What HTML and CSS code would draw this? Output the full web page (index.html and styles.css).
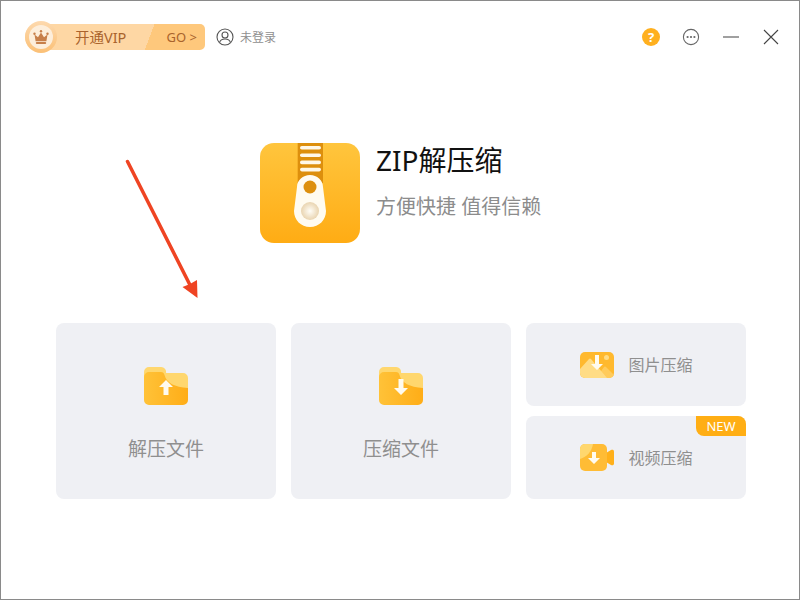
FILE: index.html
```html
<!DOCTYPE html>
<html>
<head>
  <title>ZIP解压缩</title>
  <link rel="stylesheet" href="styles.css">
</head>
<body>
  <div class="window">
    <div class="topbar">
      <div class="vip">
        <div class="vip-badge">
          <svg width="32" height="32" viewBox="0 0 32 32">
            <defs>
              <linearGradient id="badgeRing" x1="0" y1="0" x2="0" y2="1">
                <stop offset="0" stop-color="#fdd9ae"/>
                <stop offset="1" stop-color="#fbc076"/>
              </linearGradient>
            </defs>
            <circle cx="16" cy="16" r="16" fill="url(#badgeRing)"/>
            <circle cx="16" cy="16" r="12" fill="#fdeedb"/>
            <path d="M9.500 13.600l3.500 2.600L16 11.400l3 4.800 3.500-2.600-1.100 6.600H10.600z" fill="#c77f4a"/>
            <rect x="10.800" y="21" width="10.400" height="2" rx="1" fill="#c77f4a"/>
            <circle cx="9.500" cy="12.800" r="1.200" fill="#c77f4a"/>
            <circle cx="16" cy="10.200" r="1.200" fill="#c77f4a"/>
            <circle cx="22.500" cy="12.800" r="1.200" fill="#c77f4a"/>
          </svg>
        </div>
        <span class="vip-text">开通VIP</span>
        <span class="vip-go">GO &gt;</span>
      </div>
      <div class="user">
        <svg width="18" height="18" viewBox="0 0 18 18" fill="none" stroke="#555" stroke-width="1.1">
          <circle cx="9" cy="9" r="8"/>
          <circle cx="9" cy="7" r="3"/>
          <path d="M3.600 14.400c.6-2.400 2.600-3.400 5.400-3.400s4.800 1 5.400 3.400"/>
        </svg>
        <span>未登录</span>
      </div>
      <div class="controls">
        <div class="help">?</div>
        <svg width="18" height="18" viewBox="0 0 18 18">
          <circle cx="9" cy="9" r="7.600" fill="none" stroke="#666" stroke-width="1.1"/>
          <circle cx="5.600" cy="9" r="1.100" fill="#666"/>
          <circle cx="9" cy="9" r="1.100" fill="#666"/>
          <circle cx="12.400" cy="9" r="1.100" fill="#666"/>
        </svg>
        <svg class="ctl-min" width="16" height="16" viewBox="0 0 16 16">
          <path d="M0 8h16" stroke="#777" stroke-width="1.400"/>
        </svg>
        <svg class="ctl-close" width="16" height="16" viewBox="0 0 16 16">
          <path d="M1 1l14 14M15 1L1 15" stroke="#444" stroke-width="1.100" fill="none"/>
        </svg>
      </div>
    </div>

    <div class="hero">
      <svg class="logo" width="100" height="100" viewBox="0 0 100 100">
        <defs>
          <linearGradient id="logoFill" x1="0" y1="0" x2="0" y2="1">
            <stop offset="0" stop-color="#ffc53d"/>
            <stop offset="1" stop-color="#ffac14"/>
          </linearGradient>
          <radialGradient id="knob">
            <stop offset="0" stop-color="#fffdf6"/>
            <stop offset="1" stop-color="#e9d4b0"/>
          </radialGradient>
        </defs>
        <rect width="100" height="100" rx="14" fill="url(#logoFill)"/>
        <rect x="37.700" y="0" width="25.300" height="40" fill="#dd8f0d"/>
        <rect x="40" y="3" width="21" height="3.600" rx="1.800" fill="#fff8e8"/>
        <rect x="40" y="10.400" width="21" height="3.600" rx="1.800" fill="#fff8e8"/>
        <rect x="40" y="17.600" width="21" height="3.600" rx="1.800" fill="#fff8e8"/>
        <rect x="40" y="24.800" width="21" height="3.600" rx="1.800" fill="#fff8e8"/>
        <path d="M50 32c7 0 13 5 13 12l3 24c0 9-7 16-16 16s-16-7-16-16l3-24c0-7 6-12 13-12z" fill="#fffbf0"/>
        <circle cx="50" cy="44" r="6.500" fill="#dd8f0d"/>
        <circle cx="50" cy="68" r="9" fill="url(#knob)"/>
      </svg>
      <div class="hero-text">
        <h1>ZIP解压缩</h1>
        <p>方便快捷 值得信赖</p>
      </div>
    </div>

    <div class="cards">
      <div class="card card-big">
        <svg width="44" height="38" viewBox="0 0 44 38">
          <use href="#folder"/>
          <path d="M22 13l-7 7h4.500v8h5v-8H29z" fill="#fffbf0"/>
        </svg>
        <span>解压文件</span>
      </div>
      <div class="card card-big">
        <svg width="44" height="38" viewBox="0 0 44 38">
          <use href="#folder"/>
          <path d="M19.500 12h5v9H29l-7 7-7-7h4.500z" fill="#fffbf0"/>
        </svg>
        <span>压缩文件</span>
      </div>
      <div class="card-stack">
        <div class="card card-small">
          <svg width="34" height="26" viewBox="0 0 34 26">
            <rect width="34" height="26" rx="5" fill="#ffb92e"/>
            <path d="M16 26l8-11c.6-.8 1.400-.8 2 0l8 8a5 5 0 0 1-5 3z" fill="#ffcb5c"/>
            <path d="M0 17L9 7c.6-.7 1.400-.7 2 0l16 19H5a5 5 0 0 1-5-5z" fill="#ffdc85"/>
            <circle cx="26.500" cy="5.500" r="2.500" fill="#ffdc85"/>
            <path d="M15 3h4v9h4l-6 6-6-6h4z" fill="#fffbf0"/>
          </svg>
          <span>图片压缩</span>
        </div>
        <div class="card card-small">
          <div class="new-tag">NEW</div>
          <svg width="34" height="27" viewBox="0 0 34 27">
            <path d="M26 9l5-3c1.400-.8 3-.2 3 1.500v12c0 1.700-1.600 2.300-3 1.500l-5-3z" fill="#ffb01a"/>
            <rect width="27" height="27" rx="5" fill="#ffbc35"/>
            <path d="M0 15V5a5 5 0 0 1 5-5h8C12 7 7 13 0 15z" fill="#ffd76e"/>
            <path d="M12 8h4v6h4l-6 6-6-6h4z" fill="#fffbf0"/>
          </svg>
          <span>视频压缩</span>
        </div>
      </div>
    </div>

    <svg class="arrow" width="100" height="160" viewBox="0 0 100 160">
      <path d="M17.500 11.500L80 135" stroke="#ef4423" stroke-width="3.500" stroke-linecap="round"/>
      <path d="M87.500 148L72.500 137 80 134 87 130z" fill="#ef4423"/>
    </svg>

    <svg class="defs" width="0" height="0">
      <defs>
        <linearGradient id="folderFill" x1="0" y1="0" x2="1" y2="0">
          <stop offset="0" stop-color="#ffc238"/>
          <stop offset="1" stop-color="#ffad17"/>
        </linearGradient>
        <g id="folder">
          <path d="M0 5a5 5 0 0 1 5-5h12a5 5 0 0 1 5 6h17a5 5 0 0 1 5 5v10H0z" fill="#ffd76e"/>
          <path d="M0 10a5 5 0 0 1 5-5h12c2 0 3 1 3.500 3 2 8 10 12 23.500 13v12a5 5 0 0 1-5 5H5a5 5 0 0 1-5-5z" fill="url(#folderFill)"/>
        </g>
      </defs>
    </svg>
  </div>
</body>
</html>
```

FILE: styles.css
```css
* {
  box-sizing: border-box;
}

body {
  margin: 0;
  font-family: "Noto Sans", "Noto Sans CJK SC", sans-serif;
  background: #fff;
  color: #333;
}

.window {
  position: relative;
  width: 800px;
  height: 600px;
  border: 1px solid #8a8a8a;
  overflow: hidden;
}

.topbar {
  display: flex;
  align-items: center;
  height: 32px;
  margin-top: 20px;
  padding-left: 24px;
}

.vip {
  position: relative;
  display: flex;
  align-items: center;
  width: 180px;
  height: 26px;
  background: linear-gradient(111deg, #fed7a4 0, #fed7a4 121px, #fec87c 121px);
  border-radius: 13px 5px 5px 13px;
  margin-right: 11px;
}

.vip-badge {
  width: 32px;
  height: 32px;
  flex: none;
}

.vip-text {
  margin-left: 18px;
  margin-bottom: 2px;
  font-size: 14.500px;
  color: #a9632c;
}

.vip-go {
  position: absolute;
  right: 8px;
  font-size: 13px;
  color: #a9632c;
}

.user {
  display: flex;
  align-items: center;
  gap: 6px;
  font-size: 12px;
  color: #8f8f8f;
}

.controls {
  display: flex;
  align-items: center;
  margin-left: auto;
  margin-right: 20px;
  gap: 22px;
}

.ctl-min {
  margin-left: 1px;
}

.ctl-close {
  margin-left: 2px;
}

.help {
  width: 18px;
  height: 18px;
  border-radius: 50%;
  background: #ffb01f;
  color: #fff;
  font-size: 13px;
  font-weight: 700;
  line-height: 18px;
  text-align: center;
}

.hero {
  display: flex;
  align-items: flex-start;
  margin-top: 90px;
  margin-left: 259px;
  gap: 16px;
}

.logo {
  flex: none;
}

.hero-text h1 {
  margin: 0;
  font-size: 28px;
  font-weight: 400;
  line-height: 34px;
  color: #111;
}

.hero-text p {
  margin: 15px 0 0;
  font-size: 20px;
  line-height: 30px;
  color: #8c8c8c;
}

.cards {
  display: flex;
  gap: 15px;
  margin-top: 80px;
  margin-left: 55px;
}

.card {
  position: relative;
  background: #eff0f4;
  border-radius: 8px;
  color: #8f8f8f;
  display: flex;
  align-items: center;
  justify-content: center;
}

.card-big {
  flex-direction: column;
  justify-content: flex-start;
  width: 220px;
  height: 176px;
  font-size: 19px;
  line-height: 28px;
  gap: 30px;
  padding-top: 44px;
}

.card-stack {
  display: flex;
  flex-direction: column;
  gap: 10px;
  width: 220px;
}

.card-small {
  height: 83px;
  font-size: 16px;
  gap: 14px;
  padding-left: 1px;
}

.card-small span {
  margin-bottom: 2px;
}

.new-tag {
  position: absolute;
  top: 0;
  right: 0;
  width: 50px;
  height: 20px;
  background: #ffae14;
  border-radius: 0 8px 0 8px;
  color: #fff;
  font-size: 13px;
  line-height: 20px;
  text-align: center;
}

.arrow {
  position: absolute;
  left: 109px;
  top: 149px;
}

.defs {
  position: absolute;
}
```
